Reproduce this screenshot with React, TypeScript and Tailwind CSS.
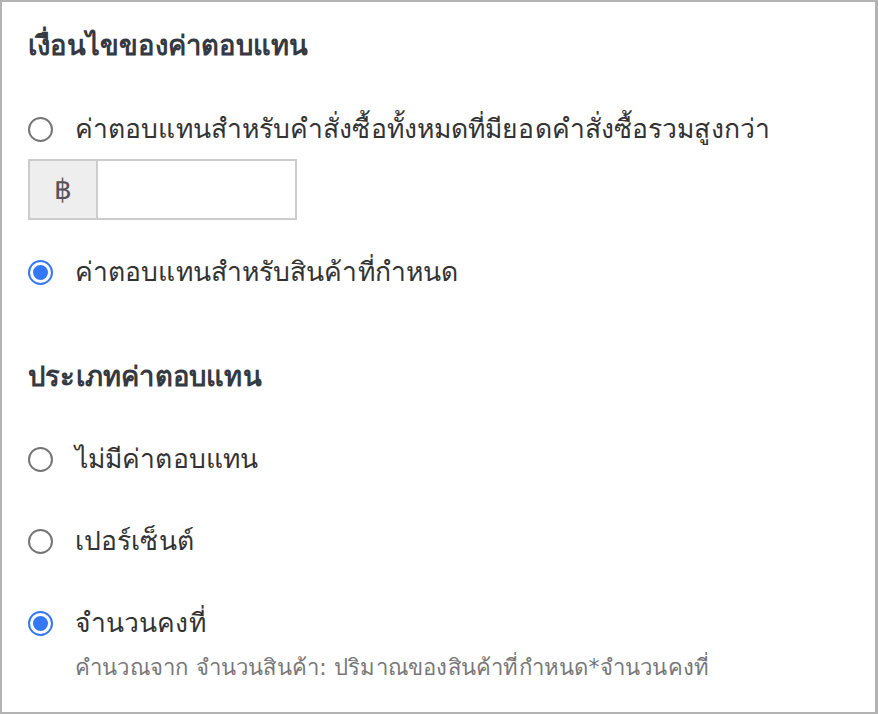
import React from "react";

type RadioProps = {
  label: string;
  checked?: boolean;
};

function Radio({ checked }: { checked?: boolean }) {
  if (checked) {
    return (
      <span className="flex h-[25px] w-[25px] shrink-0 items-center justify-center rounded-full border-2 border-[#3478f6] bg-white">
        <span className="h-[15px] w-[15px] rounded-full bg-[#3478f6]" />
      </span>
    );
  }
  return <span className="h-[25px] w-[25px] shrink-0 rounded-full border-2 border-[#757575] bg-white" />;
}

function RadioRow({ label, checked }: RadioProps) {
  return (
    <label className="flex h-[40px] items-center gap-[22px]">
      <Radio checked={checked} />
      <span className="whitespace-nowrap text-[26.5px] tracking-[0.1px] text-[#333333]">{label}</span>
    </label>
  );
}

export default function App() {
  return (
    <div className="h-[714px] w-[878px] bg-white" style={{ fontFamily: '"DejaVu Sans", sans-serif' }}>
      <div className="h-full w-full border-2 border-r-[3px] border-[#b3b3b3] px-[26px] pt-[22px]">
        <h2 className="text-[27.4px] font-bold leading-[44px] tracking-[0.2px] text-[#353a42]">เงื่อนไขของค่าตอบแทน</h2>

        <div className="mt-[41px]">
          <RadioRow label="ค่าตอบแทนสำหรับคำสั่งซื้อทั้งหมดที่มียอดคำสั่งซื้อรวมสูงกว่า" />
        </div>
        <div className="mt-[10px] flex h-[61px] w-[269px] border-2 border-[#cccccc]">
          <span className="flex w-[68px] items-center justify-center border-r-2 border-[#cccccc] bg-[#eeeeee] text-[28px] text-[#555555]">
            ฿
          </span>
          <input className="min-w-0 flex-1 bg-white outline-none" />
        </div>
        <div className="mt-[32px]">
          <RadioRow label="ค่าตอบแทนสำหรับสินค้าที่กำหนด" checked />
        </div>

        <h2 className="mt-[63px] text-[27.4px] font-bold leading-[44px] tracking-[0.2px] text-[#353a42]">ประเภทค่าตอบแทน</h2>

        <div className="mt-[40px] flex flex-col gap-[42px]">
          <RadioRow label="ไม่มีค่าตอบแทน" />
          <RadioRow label="เปอร์เซ็นต์" />
          <div>
            <RadioRow label="จำนวนคงที่" checked />
            <p className="mt-[8px] whitespace-nowrap pl-[47px] text-[22.1px] tracking-[0.2px] text-[#777777]">
              คำนวณจาก จำนวนสินค้า: ปริมาณของสินค้าที่กำหนด*จำนวนคงที่
            </p>
          </div>
        </div>
      </div>
    </div>
  );
}
